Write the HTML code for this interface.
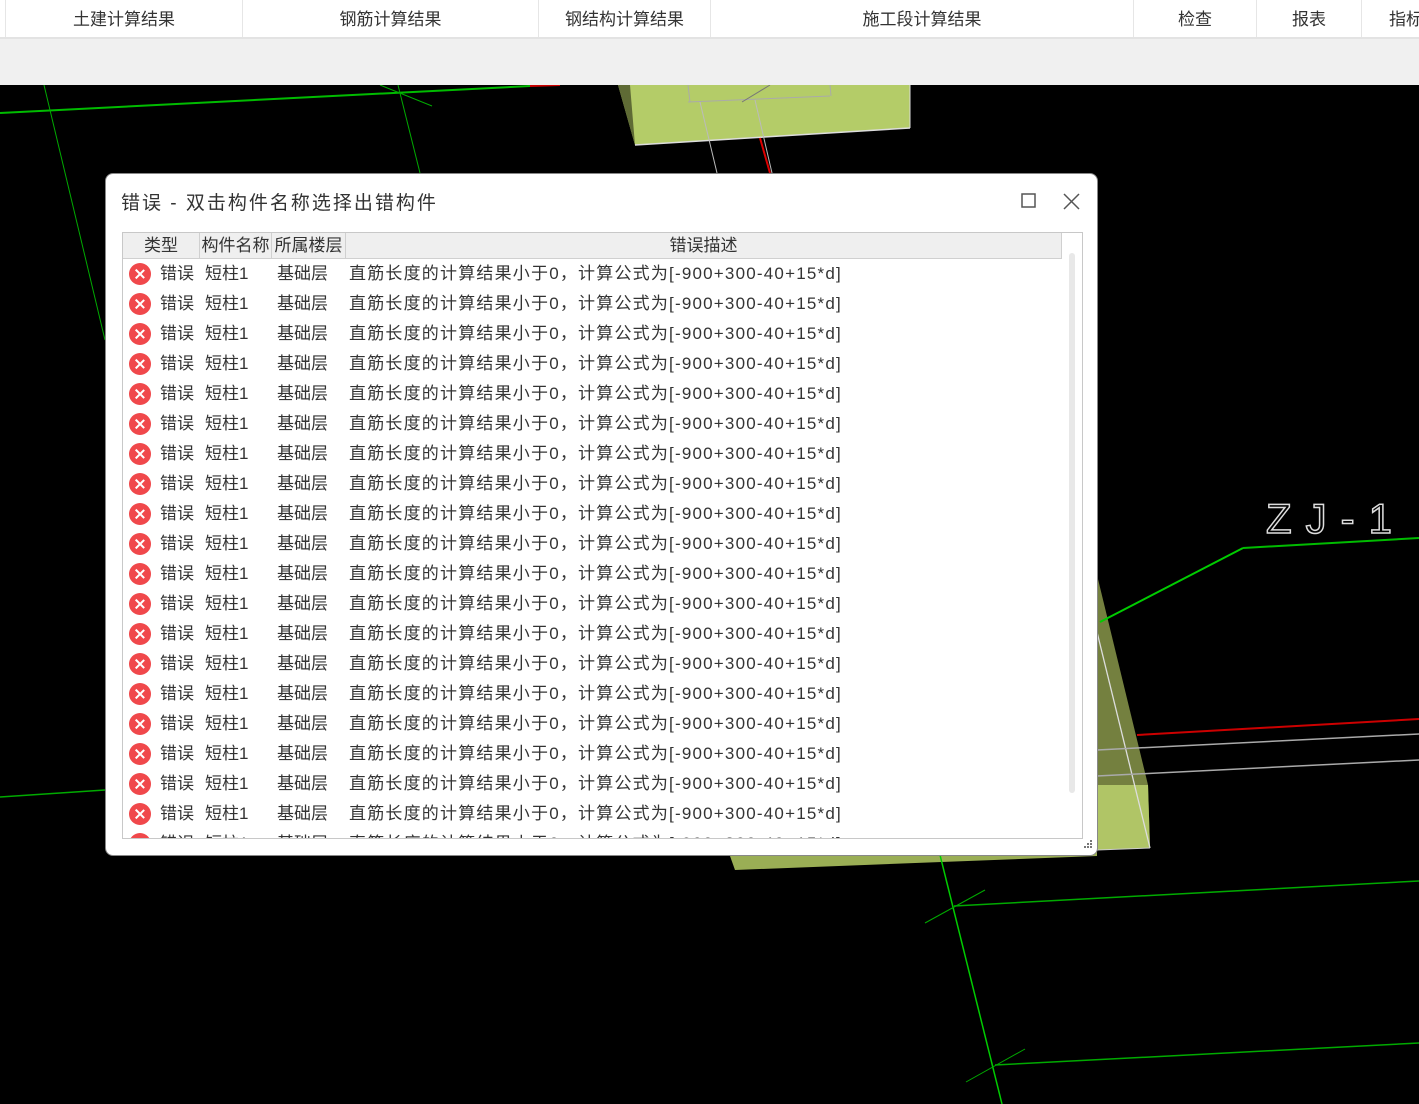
<!DOCTYPE html>
<html><head><meta charset="utf-8">
<style>
*{margin:0;padding:0;box-sizing:border-box}
body{width:1419px;height:1104px;overflow:hidden;background:#000;position:relative;font-family:"Liberation Sans","Noto Sans CJK SC",sans-serif;color:#333}
.top{position:absolute;left:0;top:0;width:1419px;height:39px;background:#fff;border-bottom:2px solid #e3e3e3}
.tab{position:absolute;top:0;height:37px;line-height:40px;text-align:center;font-size:17px;color:#333;border-left:1px solid #e6e6e6;white-space:nowrap;overflow:hidden}
.band{position:absolute;left:0;top:39px;width:1419px;height:46px;background:#f0f0f0}
svg.bg{position:absolute;left:0;top:0}
.dlg{position:absolute;left:105px;top:173px;width:993px;height:683px;background:#fff;border-radius:8px;border:1px solid #888}
.title{position:absolute;left:15px;top:14px;font-size:19px;color:#333;letter-spacing:2px;white-space:nowrap}
.list{position:absolute;left:16px;top:58px;width:961px;height:607px;border:1px solid #c8c8c8;overflow:hidden;background:#fff}
.hdr{position:absolute;left:0;top:0;width:939px;height:26px;background:#efefef;border-bottom:1px solid #d0d0d0;font-size:17px;line-height:26px}
.hdr span{position:absolute;top:0;height:26px;border-right:1px solid #d0d0d0;text-align:center;white-space:nowrap}
.row{position:absolute;left:0;height:30px;width:940px;font-size:17px;line-height:30px;white-space:nowrap;color:#333}
.row i{position:absolute;left:6px;top:4px;width:22px;height:22px;border-radius:50%;background:#f0484b}
.row i:before,.row i:after{content:"";position:absolute;left:10px;top:5px;width:1.6px;height:12px;background:#fff;transform:rotate(45deg)}
.row i:after{transform:rotate(-45deg)}
.row b{font-weight:normal;position:absolute;top:0}
.row b.d{letter-spacing:1.2px}
.sb{position:absolute;left:946px;top:20px;width:6px;height:540px;background:#e8e8e8;border-radius:3px}
</style></head><body>
<svg class="bg" width="1419" height="1104">
<polygon points="618,85 910,85 910,128 635,145" fill="#b4cc68"/>
<polygon points="618,85 630,85 635,145" fill="#5f6b35"/>
<line x1="635" y1="145" x2="910" y2="128" stroke="#ddd" stroke-width="1.5"/>
<line x1="910" y1="85" x2="910" y2="128" stroke="#ddd"/>
<line x1="688" y1="102" x2="830" y2="96" stroke="#aaa"/>
<line x1="688" y1="85" x2="690" y2="102" stroke="#aaa"/>
<line x1="830" y1="85" x2="831" y2="96" stroke="#aaa"/>
<line x1="700" y1="102" x2="717" y2="173" stroke="#bbb"/>
<line x1="755" y1="100" x2="772" y2="173" stroke="#bbb"/>
<line x1="760" y1="138" x2="770" y2="173" stroke="#d00" stroke-width="2"/>
<line x1="742" y1="102" x2="770" y2="85" stroke="#777"/>
<line x1="0" y1="113" x2="530" y2="86" stroke="#0b0" stroke-width="2"/>
<line x1="530" y1="86" x2="560" y2="85" stroke="#c00" stroke-width="2"/>
<line x1="44" y1="85" x2="105" y2="340" stroke="#0a0"/>
<line x1="398" y1="85" x2="420" y2="173" stroke="#0a0"/>
<line x1="380" y1="85" x2="432" y2="106" stroke="#0a0"/>
<line x1="0" y1="797" x2="105" y2="790" stroke="#0a0" stroke-width="1.5"/>
<polygon points="1097,575 1148,785 1150,848 1097,850" fill="#74803f"/>
<polygon points="1097,785 1148,785 1150,848 1097,850" fill="#b0c566"/>
<polygon points="730,856 1097,852 1097,856 735,870" fill="#9aae55"/>
<line x1="1097" y1="632" x2="1150" y2="848" stroke="#ddd" stroke-width="1.3"/>
<line x1="1097" y1="850" x2="1150" y2="848" stroke="#ccc"/>
<line x1="1100" y1="622" x2="1243" y2="548" stroke="#0c0" stroke-width="2"/>
<line x1="1243" y1="548" x2="1419" y2="538" stroke="#0b0" stroke-width="2"/>
<line x1="1137" y1="735" x2="1419" y2="719" stroke="#c00" stroke-width="2"/>
<line x1="1097" y1="750" x2="1419" y2="734" stroke="#aaa" stroke-width="1.5"/>
<line x1="1097" y1="776" x2="1419" y2="760" stroke="#aaa" stroke-width="1.5"/>
<line x1="940" y1="855" x2="1002" y2="1104" stroke="#0c0" stroke-width="1.5"/>
<line x1="954" y1="906" x2="1419" y2="881" stroke="#0a0" stroke-width="1.5"/>
<line x1="995" y1="1065" x2="1419" y2="1043" stroke="#0a0" stroke-width="1.5"/>
<line x1="925" y1="923" x2="985" y2="890" stroke="#0a0"/>
<line x1="966" y1="1082" x2="1025" y2="1049" stroke="#0a0"/>
<text x="1266" y="533" fill="none" stroke="#ddd" stroke-width="1.5" font-family="Liberation Sans" font-size="42" font-weight="normal" letter-spacing="14">ZJ-1</text>
</svg>
<div class="top">
<div class="tab" style="left:5px;width:237px">土建计算结果</div>
<div class="tab" style="left:242px;width:296px">钢筋计算结果</div>
<div class="tab" style="left:538px;width:172px">钢结构计算结果</div>
<div class="tab" style="left:710px;width:423px">施工段计算结果</div>
<div class="tab" style="left:1133px;width:123px">检查</div>
<div class="tab" style="left:1256px;width:105px">报表</div>
<div class="tab" style="left:1361px;width:58px;text-align:left;padding-left:27px">指标</div>
</div>
<div class="band"></div>
<div class="dlg">
<div class="title">错误 - 双击构件名称选择出错构件</div>
<svg style="position:absolute;left:915px;top:18px" width="60" height="20"><rect x="1" y="2" width="13" height="13" fill="none" stroke="#555" stroke-width="1.5"/><path d="M43 2 L58 17 M58 2 L43 17" stroke="#555" stroke-width="1.5"/></svg>
<div class="list">
<div class="hdr">
<span style="left:0;width:77px">类型</span>
<span style="left:77px;width:72px">构件名称</span>
<span style="left:149px;width:74px">所属楼层</span>
<span style="left:223px;width:716px">错误描述</span>
</div>
<div class="sb"></div>
<div class="row" style="top:26px"><i></i><b style="left:37px">错误</b><b style="left:82px">短柱1</b><b style="left:154px">基础层</b><b class="d" style="left:226px">直筋长度的计算结果小于0，计算公式为[-900+300-40+15*d]</b></div>
<div class="row" style="top:56px"><i></i><b style="left:37px">错误</b><b style="left:82px">短柱1</b><b style="left:154px">基础层</b><b class="d" style="left:226px">直筋长度的计算结果小于0，计算公式为[-900+300-40+15*d]</b></div>
<div class="row" style="top:86px"><i></i><b style="left:37px">错误</b><b style="left:82px">短柱1</b><b style="left:154px">基础层</b><b class="d" style="left:226px">直筋长度的计算结果小于0，计算公式为[-900+300-40+15*d]</b></div>
<div class="row" style="top:116px"><i></i><b style="left:37px">错误</b><b style="left:82px">短柱1</b><b style="left:154px">基础层</b><b class="d" style="left:226px">直筋长度的计算结果小于0，计算公式为[-900+300-40+15*d]</b></div>
<div class="row" style="top:146px"><i></i><b style="left:37px">错误</b><b style="left:82px">短柱1</b><b style="left:154px">基础层</b><b class="d" style="left:226px">直筋长度的计算结果小于0，计算公式为[-900+300-40+15*d]</b></div>
<div class="row" style="top:176px"><i></i><b style="left:37px">错误</b><b style="left:82px">短柱1</b><b style="left:154px">基础层</b><b class="d" style="left:226px">直筋长度的计算结果小于0，计算公式为[-900+300-40+15*d]</b></div>
<div class="row" style="top:206px"><i></i><b style="left:37px">错误</b><b style="left:82px">短柱1</b><b style="left:154px">基础层</b><b class="d" style="left:226px">直筋长度的计算结果小于0，计算公式为[-900+300-40+15*d]</b></div>
<div class="row" style="top:236px"><i></i><b style="left:37px">错误</b><b style="left:82px">短柱1</b><b style="left:154px">基础层</b><b class="d" style="left:226px">直筋长度的计算结果小于0，计算公式为[-900+300-40+15*d]</b></div>
<div class="row" style="top:266px"><i></i><b style="left:37px">错误</b><b style="left:82px">短柱1</b><b style="left:154px">基础层</b><b class="d" style="left:226px">直筋长度的计算结果小于0，计算公式为[-900+300-40+15*d]</b></div>
<div class="row" style="top:296px"><i></i><b style="left:37px">错误</b><b style="left:82px">短柱1</b><b style="left:154px">基础层</b><b class="d" style="left:226px">直筋长度的计算结果小于0，计算公式为[-900+300-40+15*d]</b></div>
<div class="row" style="top:326px"><i></i><b style="left:37px">错误</b><b style="left:82px">短柱1</b><b style="left:154px">基础层</b><b class="d" style="left:226px">直筋长度的计算结果小于0，计算公式为[-900+300-40+15*d]</b></div>
<div class="row" style="top:356px"><i></i><b style="left:37px">错误</b><b style="left:82px">短柱1</b><b style="left:154px">基础层</b><b class="d" style="left:226px">直筋长度的计算结果小于0，计算公式为[-900+300-40+15*d]</b></div>
<div class="row" style="top:386px"><i></i><b style="left:37px">错误</b><b style="left:82px">短柱1</b><b style="left:154px">基础层</b><b class="d" style="left:226px">直筋长度的计算结果小于0，计算公式为[-900+300-40+15*d]</b></div>
<div class="row" style="top:416px"><i></i><b style="left:37px">错误</b><b style="left:82px">短柱1</b><b style="left:154px">基础层</b><b class="d" style="left:226px">直筋长度的计算结果小于0，计算公式为[-900+300-40+15*d]</b></div>
<div class="row" style="top:446px"><i></i><b style="left:37px">错误</b><b style="left:82px">短柱1</b><b style="left:154px">基础层</b><b class="d" style="left:226px">直筋长度的计算结果小于0，计算公式为[-900+300-40+15*d]</b></div>
<div class="row" style="top:476px"><i></i><b style="left:37px">错误</b><b style="left:82px">短柱1</b><b style="left:154px">基础层</b><b class="d" style="left:226px">直筋长度的计算结果小于0，计算公式为[-900+300-40+15*d]</b></div>
<div class="row" style="top:506px"><i></i><b style="left:37px">错误</b><b style="left:82px">短柱1</b><b style="left:154px">基础层</b><b class="d" style="left:226px">直筋长度的计算结果小于0，计算公式为[-900+300-40+15*d]</b></div>
<div class="row" style="top:536px"><i></i><b style="left:37px">错误</b><b style="left:82px">短柱1</b><b style="left:154px">基础层</b><b class="d" style="left:226px">直筋长度的计算结果小于0，计算公式为[-900+300-40+15*d]</b></div>
<div class="row" style="top:566px"><i></i><b style="left:37px">错误</b><b style="left:82px">短柱1</b><b style="left:154px">基础层</b><b class="d" style="left:226px">直筋长度的计算结果小于0，计算公式为[-900+300-40+15*d]</b></div>
<div class="row" style="top:596px"><i></i><b style="left:37px">错误</b><b style="left:82px">短柱1</b><b style="left:154px">基础层</b><b class="d" style="left:226px">直筋长度的计算结果小于0，计算公式为[-900+300-40+15*d]</b></div>
</div>
<svg style="position:absolute;left:976px;top:666px" width="12" height="12"><g fill="#777"><rect x="8" y="0" width="2" height="2"/><rect x="5" y="3" width="2" height="2"/><rect x="8" y="3" width="2" height="2"/><rect x="2" y="6" width="2" height="2"/><rect x="5" y="6" width="2" height="2"/><rect x="8" y="6" width="2" height="2"/></g></svg>
</div>
</body></html>
